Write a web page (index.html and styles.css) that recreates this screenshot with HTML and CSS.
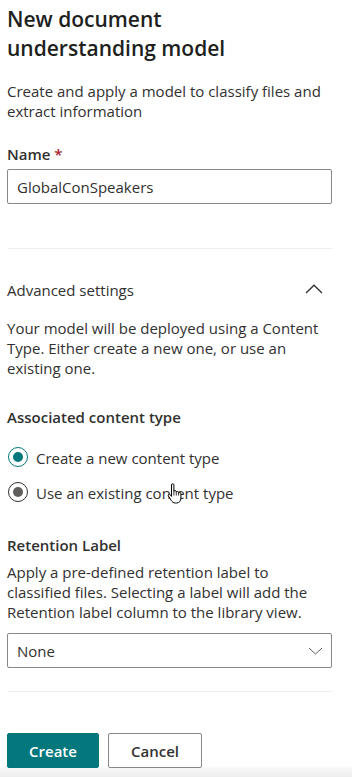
FILE: index.html
```html
<!DOCTYPE html>
<html lang="en">
<head>
<meta charset="utf-8">
<title>New document understanding model</title>
<link rel="stylesheet" href="styles.css">
</head>
<body>
<div class="panel">
  <h1 class="title">New document<br>understanding model</h1>
  <p class="desc">Create and apply a model to classify files and extract information</p>

  <label class="label label-name">Name <span class="req">*</span></label>
  <div class="textfield">GlobalConSpeakers</div>

  <div class="divider divider-top"></div>

  <div class="section-head">
    <span>Advanced settings</span>
    <svg class="chev-up" width="18" height="10" viewBox="0 0 18 10"><path d="M1 9 L9 1.2 L17 9" fill="none" stroke="#323130" stroke-width="1.3"/></svg>
  </div>
  <p class="para">Your model will be deployed using a Content Type. Either create a new one, or use an existing one.</p>

  <div class="label label-assoc">Associated content type</div>
  <div class="radios">
    <div class="radio-row">
      <span class="radio checked"><span class="dot"></span></span>
      <span class="radio-text">Create a new content type</span>
    </div>
    <div class="radio-row">
      <span class="radio hovered"><span class="dot"></span></span>
      <span class="radio-text">Use an existing content type</span>
      <svg class="cursor" width="15" height="22" viewBox="0 0 15 22"><path d="M4.5 2a1.2 1.2 0 0 1 2.4 0v6.6a1.2 1.2 0 0 1 2.4 0.2v0.5a1.2 1.2 0 0 1 2.3 0.3v0.6a1.2 1.2 0 0 1 2.3 0.4V15c0 2.8-1.6 5-4.3 5H8.3c-2 0-3.1-1-4.1-2.600L1.4 13a1.1 1.1 0 0 1 1.8-1.3L4.5 13.4Z" fill="#fff" stroke="#000" stroke-width="1" stroke-linejoin="round"/><path d="M6.9 9v3.5M9.3 9.3v3.2M11.6 10v2.6" stroke="#000" stroke-width="0.8" fill="none"/></svg>
    </div>
  </div>

  <div class="label label-ret">Retention Label</div>
  <p class="para para-ret">Apply a pre-defined retention label to classified files. Selecting a label will add the Retention label column to the library view.</p>
  <div class="dropdown">
    <span>None</span>
    <svg class="chev-down" width="15" height="8" viewBox="0 0 15 8"><path d="M1 1 L7.5 7 L14 1" fill="none" stroke="#605e5c" stroke-width="1"/></svg>
  </div>

  <div class="divider divider-bottom"></div>
</div>
<div class="footer">
  <button class="btn btn-primary">Create</button>
  <button class="btn btn-default">Cancel</button>
</div>
</body>
</html>
```

FILE: styles.css
```css
html, body {
  margin: 0;
  padding: 0;
  background: #ffffff;
}
body {
  font-family: "Open Sans", "Noto Sans", sans-serif;
  font-size: 15px;
  line-height: 20px;
  color: #323130;
}
.panel {
  padding: 0 20px 0 7px;
}
.title {
  margin: 5px 0 0;
  font-size: 21px;
  line-height: 29px;
  font-weight: 600;
  color: #201f1e;
}
.desc {
  margin: 18px 0 0;
}
.label {
  display: block;
  font-weight: 600;
}
.label-name {
  margin-top: 23px;
}
.req {
  color: #a4262c;
}
.textfield {
  margin-top: 5px;
  box-sizing: border-box;
  height: 35px;
  border: 1px solid #8a8886;
  border-radius: 2px;
  padding: 0 9px;
  display: flex;
  align-items: center;
}
.divider {
  height: 1px;
  background: #f0efee;
  margin-left: 1px;
}
.divider-top {
  margin-top: 44px;
}
.section-head {
  margin-top: 31px;
  display: flex;
  justify-content: space-between;
  align-items: center;
  padding-right: 9px;
}
.chev-up {
  display: block;
  margin-top: -3px;
}
.para {
  margin: 18px 0 0;
}
.label-assoc {
  margin-top: 29px;
}
.radios {
  margin-top: 20px;
  display: flex;
  flex-direction: column;
  gap: 15px;
}
.radio-row {
  position: relative;
  display: flex;
  align-items: center;
  gap: 8px;
  height: 20px;
  padding-left: 1px;
}
.radio {
  box-sizing: border-box;
  width: 20px;
  height: 20px;
  border-radius: 50%;
  border: 1px solid #323130;
  display: flex;
  align-items: center;
  justify-content: center;
  flex: none;
}
.radio .dot {
  width: 10px;
  height: 10px;
  border-radius: 50%;
}
.radio.checked {
  border-color: #03787c;
}
.radio.checked .dot {
  background: #03787c;
}
.radio.hovered .dot {
  background: #605e5c;
}
.radio-text {
  position: relative;
  top: 1px;
}
.cursor {
  position: absolute;
  left: 160px;
  top: 1px;
}
.label-ret {
  margin-top: 33px;
}
.para-ret {
  margin-top: 7px;
}
.dropdown {
  margin-top: 11px;
  box-sizing: border-box;
  height: 35px;
  border: 1px solid #8a8886;
  border-radius: 2px;
  padding: 0 8px 0 9px;
  display: flex;
  align-items: center;
  justify-content: space-between;
}
.chev-down {
  display: block;
}
.divider-bottom {
  margin-top: 23px;
}
.footer {
  padding: 41px 0 10px 7px;
  display: flex;
  gap: 9px;
  background: linear-gradient(to bottom, #ffffff 0, #ffffff calc(100% - 12px), #f7f7f7 calc(100% - 10px), #ececec 100%);
}
.btn {
  box-sizing: border-box;
  height: 35px;
  border-radius: 2px;
  font-family: "Open Sans", "Noto Sans", sans-serif;
  font-size: 15px;
  font-weight: 600;
  padding: 0;
  cursor: pointer;
}
.btn-primary {
  width: 92px;
  background: #03787c;
  border: 1px solid #03787c;
  color: #ffffff;
}
.btn-default {
  width: 94px;
  background: #ffffff;
  border: 1px solid #8a8886;
  color: #323130;
}
```
